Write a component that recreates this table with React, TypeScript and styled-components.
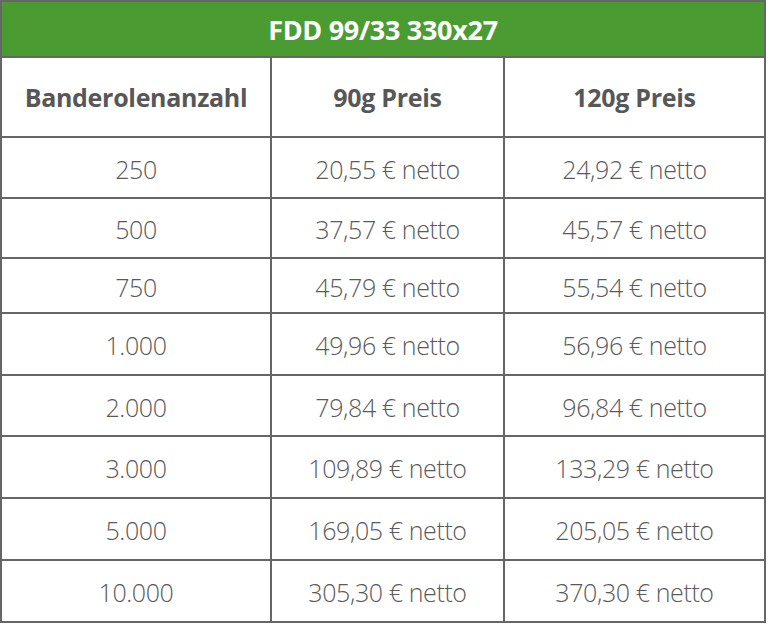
import React from "react";
import styled, { createGlobalStyle } from "styled-components";

const GlobalStyle = createGlobalStyle`
  html, body {
    margin: 0;
    padding: 0;
    background: #ffffff;
  }
  body {
    font-family: "Open Sans", "Liberation Sans", sans-serif;
  }
`;

const rows = [
  { count: "250", p90: "20,55 € netto", p120: "24,92 € netto", h: 59 },
  { count: "500", p90: "37,57 € netto", p120: "45,57 € netto", h: 58 },
  { count: "750", p90: "45,79 € netto", p120: "55,54 € netto", h: 53 },
  { count: "1.000", p90: "49,96 € netto", p120: "56,96 € netto", h: 60 },
  { count: "2.000", p90: "79,84 € netto", p120: "96,84 € netto", h: 59 },
  { count: "3.000", p90: "109,89 € netto", p120: "133,29 € netto", h: 60 },
  { count: "5.000", p90: "169,05 € netto", p120: "205,05 € netto", h: 60 },
  { count: "10.000", p90: "305,30 € netto", p120: "370,30 € netto", h: 60 },
];

// the grey grid gap draws the cell borders
const PriceGrid = styled.div`
  width: 762px;
  display: grid;
  grid-template-columns: 268px 231px 1fr;
  gap: 2px;
  padding: 2px;
  background: #666666;
`;

const Title = styled.div`
  grid-column: 1 / -1;
  height: 54px;
  display: flex;
  align-items: center;
  justify-content: center;
  background: #4b9b33;
  color: #ffffff;
  font-size: 27px;
  font-weight: 700;
  letter-spacing: -0.3px;
`;

const HeadCell = styled.div`
  height: 78px;
  display: flex;
  align-items: center;
  justify-content: center;
  background: #ffffff;
  color: #575757;
  font-size: 25px;
  font-weight: 700;
  letter-spacing: -0.3px;
`;

const Cell = styled.div<{ $h: number }>`
  height: ${({ $h }) => $h}px;
  display: flex;
  align-items: center;
  justify-content: center;
  padding-top: 2px;
  box-sizing: border-box;
  background: #ffffff;
  color: #5a5a5a;
  font-size: 25px;
  font-weight: 300;
  letter-spacing: -0.4px;
`;

export default function App() {
  return (
    <>
      <GlobalStyle />
      <PriceGrid>
        <Title>FDD 99/33 330x27</Title>
        <HeadCell>Banderolenanzahl</HeadCell>
        <HeadCell>90g Preis</HeadCell>
        <HeadCell>120g Preis</HeadCell>
        {rows.map((r) => (
          <React.Fragment key={r.count}>
            <Cell $h={r.h}>{r.count}</Cell>
            <Cell $h={r.h}>{r.p90}</Cell>
            <Cell $h={r.h}>{r.p120}</Cell>
          </React.Fragment>
        ))}
      </PriceGrid>
    </>
  );
}
